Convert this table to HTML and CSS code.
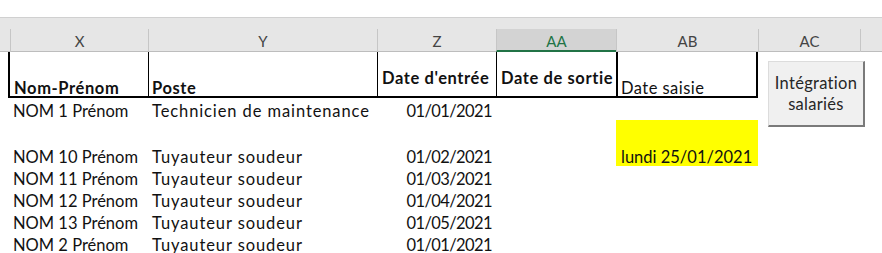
FILE: index.html
```html
<!DOCTYPE html>
<html lang="fr">
<head>
<meta charset="utf-8">
<title>Salariés</title>
<link rel="stylesheet" href="styles.css">
</head>
<body>
<div class="app">
  <div class="ribbon-edge"></div>
  <div class="colbar">
    <div class="colbar-strip"></div>
    <div class="colheads">
      <div class="corner"></div>
      <div class="colhead">X</div>
      <div class="colhead">Y</div>
      <div class="colhead">Z</div>
      <div class="colhead is-active">AA</div>
      <div class="colhead">AB</div>
      <div class="colhead">AC</div>
      <div class="colhead"></div>
    </div>
  </div>

  <div class="sheet">
    <!-- header row -->
    <div class="gutter"></div>
    <div class="th th-first">Nom-Prénom</div>
    <div class="th">Poste</div>
    <div class="th th-mid">Date d'entrée</div>
    <div class="th th-mid">Date de sortie</div>
    <div class="th th-box">Date saisie</div>
    <div class="blank"></div>
    <div class="blank"></div>

    <!-- row 1 -->
    <div class="gutter"></div>
    <div class="td td-x">NOM 1 Prénom</div>
    <div class="td td-y">Technicien de maintenance</div>
    <div class="td td-num">01/01/2021</div>
    <div class="td"></div>
    <div class="td"></div>
    <div class="td"></div>
    <div class="td"></div>

    <!-- row 2 (empty, holds the date cell spanning two rows) -->
    <div class="gutter"></div>
    <div class="td td-x"></div>
    <div class="td td-y"></div>
    <div class="td td-num"></div>
    <div class="td"></div>
    <div class="td td-ab today">lundi 25/01/2021</div>
    <div class="td"></div>
    <div class="td"></div>

    <!-- row 3 -->
    <div class="gutter"></div>
    <div class="td td-x">NOM 10 Prénom</div>
    <div class="td td-y">Tuyauteur soudeur</div>
    <div class="td td-num">01/02/2021</div>
    <div class="td"></div>
    <div class="td"></div>
    <div class="td"></div>

    <div class="gutter"></div>
    <div class="td td-x">NOM 11 Prénom</div>
    <div class="td td-y">Tuyauteur soudeur</div>
    <div class="td td-num">01/03/2021</div>
    <div class="td"></div>
    <div class="td"></div>
    <div class="td"></div>
    <div class="td"></div>

    <div class="gutter"></div>
    <div class="td td-x">NOM 12 Prénom</div>
    <div class="td td-y">Tuyauteur soudeur</div>
    <div class="td td-num">01/04/2021</div>
    <div class="td"></div>
    <div class="td"></div>
    <div class="td"></div>
    <div class="td"></div>

    <div class="gutter"></div>
    <div class="td td-x">NOM 13 Prénom</div>
    <div class="td td-y">Tuyauteur soudeur</div>
    <div class="td td-num">01/05/2021</div>
    <div class="td"></div>
    <div class="td"></div>
    <div class="td"></div>
    <div class="td"></div>

    <div class="gutter"></div>
    <div class="td td-x">NOM 2 Prénom</div>
    <div class="td td-y">Tuyauteur soudeur</div>
    <div class="td td-num">01/01/2021</div>
    <div class="td"></div>
    <div class="td"></div>
    <div class="td"></div>
    <div class="td"></div>
  </div>

  <button class="macro-btn" type="button">Intégration<br>salariés</button>
</div>
</body>
</html>
```

FILE: styles.css
```css
* { box-sizing: border-box; }

html, body {
  margin: 0;
  padding: 0;
  background: #ffffff;
  overflow: hidden;
}

.app {
  position: relative;
  width: 882px;
  height: 253px;
  font-family: Lato, "Open Sans", sans-serif;
  color: #111111;
}

/* white band above the column letters */
.ribbon-edge {
  height: 18px;
  border-bottom: 1px solid #d0d0d0;
}

.colbar {
  background: #e6e6e6;
  border-bottom: 1px solid #bdbdbd;
}

.colbar-strip { height: 11px; }

.colheads {
  display: grid;
  grid-template-columns: 10px 138px 229px 119px 120px 142px 102px 1fr;
  height: 22px;
}

.colhead {
  border-left: 1px solid #c6c6c6;
  display: flex;
  align-items: center;
  justify-content: center;
  padding-top: 1px;
  font-size: 15px;
  color: #444444;
}

.colhead.is-active {
  background: #d3d3d3;
  color: #217346;
  border-bottom: 2px solid #217346;
  padding-top: 3px;
}

/* worksheet cells */
.sheet {
  display: grid;
  grid-template-columns: 8px 140px 229px 119px 120px 142px 102px 1fr;
  grid-template-rows: 46px 22px 23px 23px 22px 22px 22px 22px;
  font-size: 16.5px;
}

.th {
  border-bottom: 2px solid #000;
  border-left: 1px solid #000;
  font-weight: bold;
  letter-spacing: 0.6px;
  display: flex;
  align-items: flex-end;
  padding: 0 0 0 3px;
  line-height: 16px;
  white-space: nowrap;
}

.th-first {
  border-left: 2px solid #000;
  padding-left: 4px;
}

.th-mid {
  align-items: center;
  padding-left: 4px;
  padding-top: 8px;
}

.th-box {
  border-left: 2px solid #000;
  border-right: 2px solid #000;
  font-weight: normal;
  letter-spacing: 0.45px;
  padding-left: 3px;
}

.td {
  display: flex;
  align-items: flex-end;
  line-height: 17px;
  white-space: nowrap;
}

.td-x { padding-left: 5px; }

.td-y {
  padding-left: 4px;
  letter-spacing: 0.9px;
}

.td-num {
  justify-content: flex-end;
  padding-right: 4px;
  letter-spacing: -0.6px;
}

.td-ab { padding-left: 5px; }

.today {
  grid-row: span 2;
  background: #ffff00;
}

/* form button floating over column AC */
.macro-btn {
  position: absolute;
  left: 768px;
  top: 61px;
  width: 97px;
  height: 66px;
  margin: 0;
  padding: 0;
  background: #f0f0f0;
  border: 1px solid #dcdcdc;
  border-right: 2px solid #7a7a7a;
  border-bottom: 2px solid #7a7a7a;
  font-family: Lato, "Open Sans", sans-serif;
  font-size: 16.5px;
  letter-spacing: 0.3px;
  line-height: 21px;
  color: #262626;
  text-align: center;
}
```
